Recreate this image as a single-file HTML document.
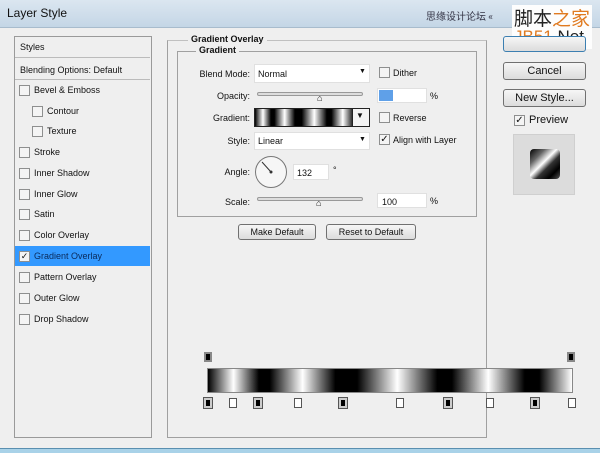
<!DOCTYPE html><html><head><style>
*{margin:0;padding:0;box-sizing:border-box}
body{width:600px;height:453px;overflow:hidden;background:#efefef;font-family:"Liberation Sans",Tahoma,sans-serif;font-size:9px;color:#111;position:relative}
.a{position:absolute}
.t{position:absolute;white-space:nowrap}
.cb{position:absolute;width:11px;height:11px;border:1px solid #8e8f8f;background:#f4f4f4}
.row{position:absolute;left:15px;width:135px;height:21px;border-bottom:1px solid #dcdcdc}
.btn{position:absolute;border:1px solid #707070;border-radius:3px;background:linear-gradient(#f6f6f6,#dcdcdc);text-align:center;font-size:11px}
.inp{position:absolute;background:#fff;border:1px solid #e0e0e0}
.lab{position:absolute;text-align:right;width:70px;font-size:9px}
.sl{position:absolute;height:4px;border:1px solid #999;border-radius:2px;background:#ddd}
.stop{position:absolute;width:8px;height:10px;border:1px solid #555}
.g{background:linear-gradient(90deg,#000 0%,#fff 7%,#000 14%,#000 17%,#fff 26%,#000 35%,#000 41%,#fff 52%,#000 63%,#000 67%,#fff 77%,#000 87%,#000 91%,#fff 100%)}
</style></head><body>
<div class="a" style="left:0;top:0;width:600px;height:28px;background:linear-gradient(#dbe6f0,#c4d6e6);border-bottom:1px solid #a8bccd"></div>
<div class="t" style="left:7px;top:6px;font-size:12px">Layer Style</div>
<div class="t" style="left:426px;top:8px;font-size:10px;color:#334;font-family:'Noto Sans CJK SC',sans-serif">思缘设计论坛 «</div>
<div class="a" style="left:512px;top:5px;width:80px;height:44px;background:#fdfdfd"></div>
<div class="t" style="left:514px;top:4px;font-size:19px;font-family:'Noto Sans CJK SC',sans-serif;color:#222">脚本<span style="color:#e07a20">之家</span></div>
<div class="t" style="left:514px;top:27px;font-size:17px;color:#e07a20">JB51<span style="color:#222">.Net</span></div>
<div class="a" style="left:0;top:448px;width:600px;height:5px;background:#a9d2e8;border-top:1px solid #5a8fb0"></div>

<div class="a" style="left:14px;top:36px;width:138px;height:402px;border:1px solid #9a9a9a;background:#efefef"></div>
<div class="row" style="top:37px;height:21px;border-bottom:1px solid #bbb"></div><div class="t" style="left:20px;top:42px">Styles</div>
<div class="row" style="top:59px;border-bottom:1px solid #bbb"></div><div class="t" style="left:20px;top:65px">Blending Options: Default</div>
<div class="a" style="left:15px;top:246px;width:135px;height:20px;background:#3399ff"></div>
<div class="cb" style="left:19px;top:85px"></div><div class="t" style="left:34px;top:85px">Bevel &amp; Emboss</div>
<div class="cb" style="left:32px;top:106px"></div><div class="t" style="left:47px;top:106px">Contour</div>
<div class="cb" style="left:32px;top:126px"></div><div class="t" style="left:47px;top:126px">Texture</div>
<div class="cb" style="left:19px;top:147px"></div><div class="t" style="left:34px;top:147px">Stroke</div>
<div class="cb" style="left:19px;top:168px"></div><div class="t" style="left:34px;top:168px">Inner Shadow</div>
<div class="cb" style="left:19px;top:189px"></div><div class="t" style="left:34px;top:189px">Inner Glow</div>
<div class="cb" style="left:19px;top:209px"></div><div class="t" style="left:34px;top:209px">Satin</div>
<div class="cb" style="left:19px;top:230px"></div><div class="t" style="left:34px;top:230px">Color Overlay</div>
<div class="cb" style="left:19px;top:251px;font-size:9px;line-height:9px;text-align:center">✓</div><div class="t" style="left:34px;top:251px;color:#0a2a5a">Gradient Overlay</div>
<div class="cb" style="left:19px;top:272px"></div><div class="t" style="left:34px;top:272px">Pattern Overlay</div>
<div class="cb" style="left:19px;top:293px"></div><div class="t" style="left:34px;top:293px">Outer Glow</div>
<div class="cb" style="left:19px;top:314px"></div><div class="t" style="left:34px;top:314px">Drop Shadow</div>

<div class="a" style="left:167px;top:40px;width:320px;height:398px;border:1px solid #a0a0a0;border-top-color:#c0c0c0"></div>
<div class="t" style="left:188px;top:34px;font-weight:bold;background:#efefef;padding:0 3px">Gradient Overlay</div>
<div class="a" style="left:177px;top:51px;width:300px;height:166px;border:1px solid #a0a0a0"></div>
<div class="t" style="left:196px;top:45px;font-weight:bold;background:#efefef;padding:0 3px">Gradient</div>

<div class="lab" style="left:180px;top:69px">Blend Mode:</div>
<div class="inp" style="left:254px;top:64px;width:116px;height:19px"></div><div class="t" style="left:258px;top:69px">Normal</div><div class="t" style="left:359px;top:68px;font-size:7px">▼</div>
<div class="cb" style="left:379px;top:67px"></div><div class="t" style="left:393px;top:68px">Dither</div>
<div class="lab" style="left:180px;top:91px">Opacity:</div>
<div class="sl" style="left:257px;top:92px;width:106px"></div><div class="t" style="left:317px;top:93px;font-size:9px">⌂</div>
<div class="inp" style="left:377px;top:88px;width:50px;height:15px"></div><div class="a" style="left:379px;top:90px;width:14px;height:11px;background:#5fa0e8"></div><div class="t" style="left:430px;top:91px">%</div>
<div class="lab" style="left:180px;top:113px">Gradient:</div>
<div class="a g" style="left:254px;top:108px;width:116px;height:19px;border:1px solid #222"></div>
<div class="a" style="left:352px;top:108px;width:18px;height:19px;border:1px solid #222;background:#f4f4f4"></div><div class="t" style="left:356px;top:111px;font-size:8px">▼</div>
<div class="cb" style="left:379px;top:112px"></div><div class="t" style="left:393px;top:113px">Reverse</div>
<div class="lab" style="left:180px;top:136px">Style:</div>
<div class="inp" style="left:254px;top:132px;width:116px;height:18px"></div><div class="t" style="left:258px;top:136px">Linear</div><div class="t" style="left:359px;top:136px;font-size:7px">▼</div>
<div class="cb" style="left:379px;top:134px;font-size:10px;line-height:10px;text-align:center">✓</div><div class="t" style="left:393px;top:135px">Align with Layer</div>
<div class="lab" style="left:180px;top:167px">Angle:</div>
<div class="a" style="left:255px;top:156px;width:32px;height:32px;border:1px solid #777;border-radius:50%;background:#f6f6f6"></div>
<svg class="a" style="left:255px;top:156px" width="32" height="32"><line x1="16" y1="16" x2="7" y2="6" stroke="#333"/><circle cx="16" cy="16" r="1.5" fill="#333"/></svg>
<div class="inp" style="left:293px;top:164px;width:36px;height:16px"></div><div class="t" style="left:297px;top:168px">132</div><div class="t" style="left:333px;top:165px">°</div>
<div class="lab" style="left:180px;top:197px">Scale:</div>
<div class="sl" style="left:257px;top:197px;width:106px"></div><div class="t" style="left:316px;top:198px">⌂</div>
<div class="inp" style="left:377px;top:193px;width:50px;height:15px"></div><div class="t" style="left:382px;top:197px">100</div><div class="t" style="left:430px;top:196px">%</div>

<div class="btn" style="left:238px;top:224px;width:78px;height:16px;font-size:9px;line-height:14px">Make Default</div>
<div class="btn" style="left:326px;top:224px;width:90px;height:16px;font-size:9px;line-height:14px">Reset to Default</div>

<div class="btn" style="left:503px;top:36px;width:83px;height:16px;border-color:#3c7fb1"></div>
<div class="btn" style="left:503px;top:62px;width:83px;height:18px;line-height:16px">Cancel</div>
<div class="btn" style="left:503px;top:89px;width:83px;height:18px;line-height:16px">New Style...</div>
<div class="cb" style="left:514px;top:115px;font-size:10px;line-height:10px;text-align:center">✓</div><div class="t" style="left:529px;top:114px;font-size:11px">Preview</div>
<div class="a" style="left:513px;top:134px;width:62px;height:61px;background:#dcdcdc;border:1px solid #cfcfcf"></div>
<div class="a" style="left:530px;top:149px;width:30px;height:30px;border-radius:4px;background:linear-gradient(135deg,#000,#666 25%,#fff 45%,#333 60%,#000 80%,#555)"></div>

<div class="a g" style="left:207px;top:368px;width:366px;height:25px;border:1px solid #888"></div>
<div class="stop" style="left:204px;top:352px;background:#000;border:2px solid #888"></div>
<div class="stop" style="left:567px;top:352px;background:#000;border:2px solid #888"></div>
<div class="stop" style="left:204px;top:398px;background:#000;border:2px solid #ccc;outline:1px solid #555"></div>
<div class="stop" style="left:229px;top:398px;background:#fff"></div>
<div class="stop" style="left:254px;top:398px;background:#000;border:2px solid #ccc;outline:1px solid #555"></div>
<div class="stop" style="left:294px;top:398px;background:#fff"></div>
<div class="stop" style="left:339px;top:398px;background:#000;border:2px solid #ccc;outline:1px solid #555"></div>
<div class="stop" style="left:396px;top:398px;background:#fff"></div>
<div class="stop" style="left:444px;top:398px;background:#000;border:2px solid #ccc;outline:1px solid #555"></div>
<div class="stop" style="left:486px;top:398px;background:#fff"></div>
<div class="stop" style="left:531px;top:398px;background:#000;border:2px solid #ccc;outline:1px solid #555"></div>
<div class="stop" style="left:568px;top:398px;background:#fff"></div>
</body></html>
